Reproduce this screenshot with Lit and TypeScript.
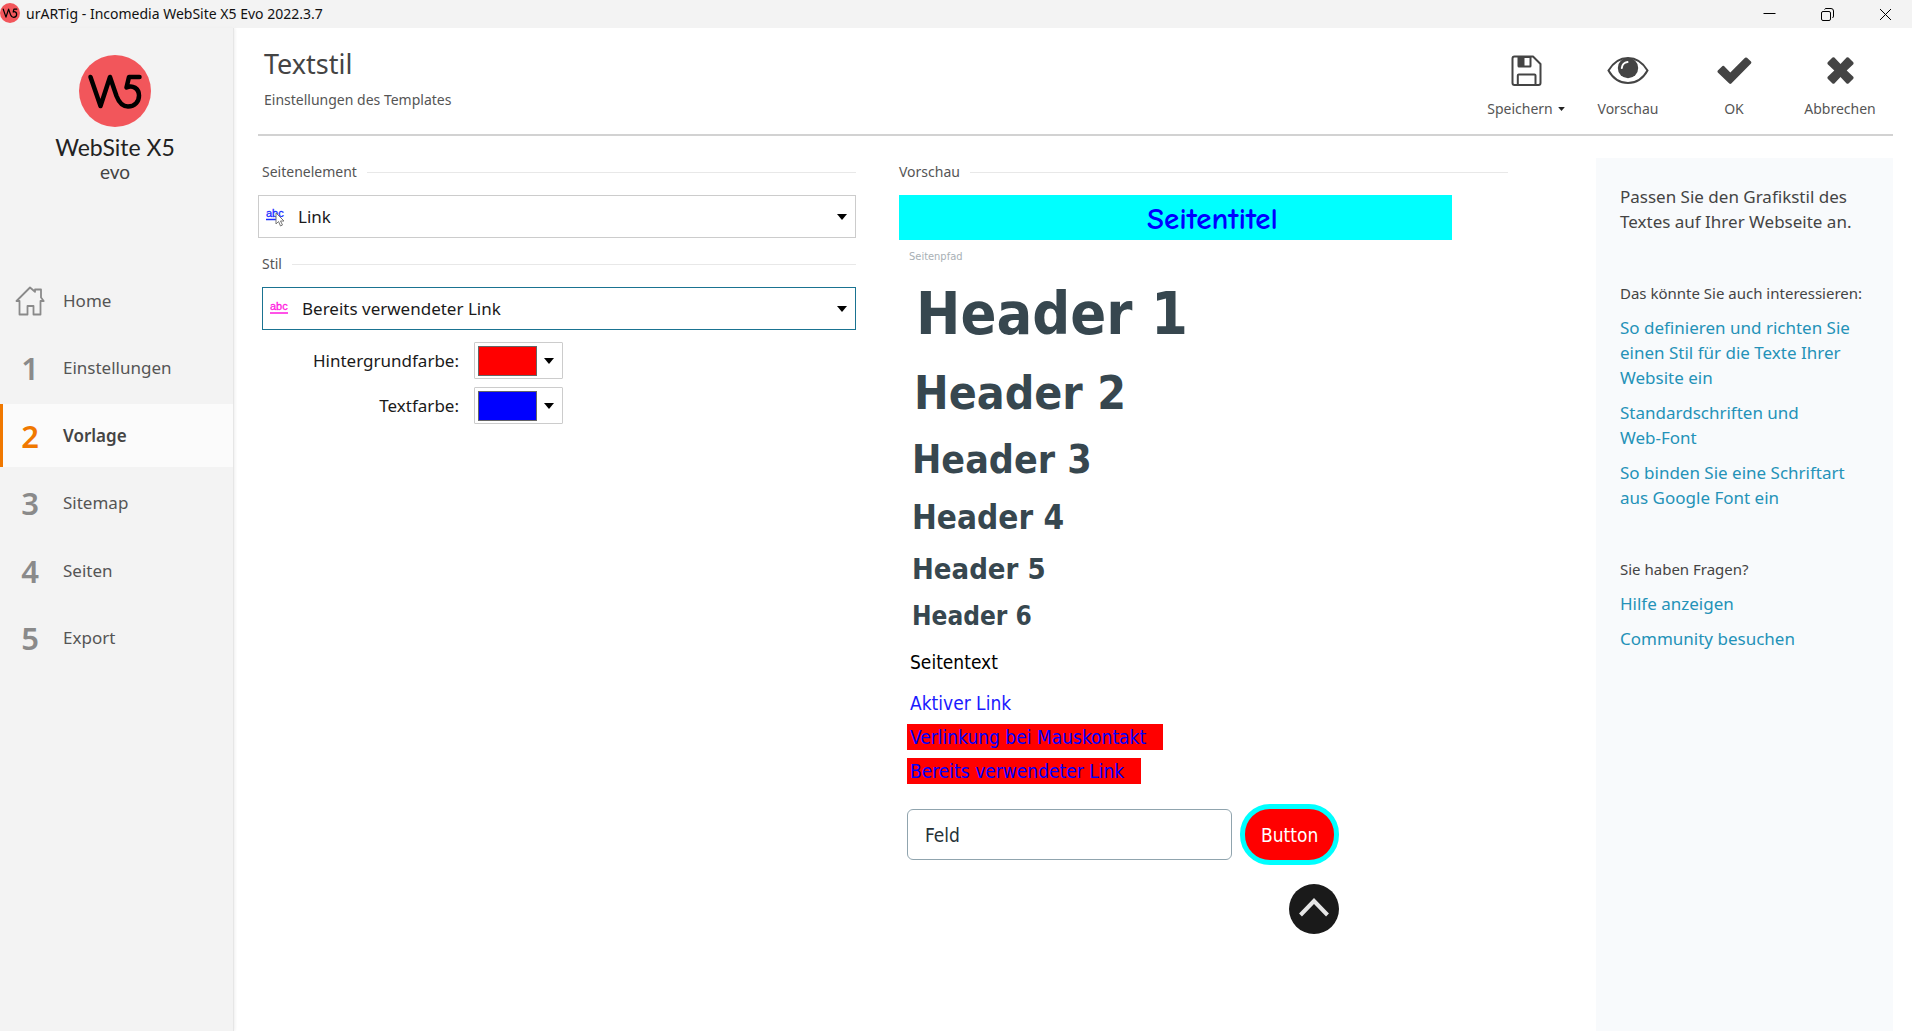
import { LitElement, html, svg, css } from "lit";
import { customElement, property, state } from "lit/decorators.js";
import { classMap } from "lit/directives/class-map.js";
import { styleMap } from "lit/directives/style-map.js";

/* Round product mark, shared by the title bar and the sidebar. */
const mark = (cls: string) => html`
  <svg class=${cls} viewBox="0 0 72 72" aria-hidden="true">
    <circle cx="36" cy="36" r="36" fill="#f2565b" />
    <path
      d="M11.500 22 L21.500 51 L31 22 L37.500 41 Q41.500 51.500 49 51.500 C56 51.500 60 46.500 60 40.500 C60 33.500 53.500 29.500 47.500 32.500 L50 22 H60.500"
      fill="none" stroke="#000" stroke-width="4.500" stroke-linecap="round" stroke-linejoin="round" />
  </svg>`;

const caret = (cls = "caret") => html`
  <svg class=${cls} viewBox="0 0 10 6" aria-hidden="true"><path d="M0 0H10L5 6Z" fill="currentColor" /></svg>`;

const icons = {
  save: svg`
    <path d="M5 1.500 H23 L30.500 9 V28 Q30.500 30 28.500 30 H4.500 Q2.500 30 2.500 28 V3.500 Q2.500 1.500 4.500 1.500 Z" fill="none" stroke="#444" stroke-width="2" stroke-linejoin="round"/>
    <path d="M7.500 2 H21.500 V11 Q21.500 12.500 20 12.500 H9 Q7.500 12.500 7.500 11 Z" fill="#444"/>
    <rect x="14.500" y="3" width="5" height="7.500" fill="#fff"/>
    <path d="M7.800 30 V20.500 Q7.800 19.500 8.800 19.500 H24.500 Q25.500 19.500 25.500 20.500 V30" fill="none" stroke="#444" stroke-width="2"/>`,
  view: svg`
    <path d="M1.500 15.500 C6 8 13 3 21 3 C29 3 36 8 40.500 15.500 C36 23.500 29 28 21 28 C13 28 6 23.500 1.500 15.500 Z" fill="none" stroke="#444" stroke-width="2"/>
    <circle cx="21" cy="13" r="10.200" fill="#444"/>
    <path d="M14.800 13 A6.500 6.500 0 0 1 20.500 7" fill="none" stroke="#fff" stroke-width="2" stroke-linecap="round"/>`,
  ok: svg`
    <path d="M5.500 11 L0.800 15.500 Q0 16.500 0.800 17.500 L12.300 28.500 Q13.300 29.300 14.300 28.500 L34 8.500 Q34.800 7.500 34 6.500 L30 2.800 Q29 2 28 2.800 L13.300 17.500 L7 11 Q6.200 10.400 5.500 11 Z" fill="#444"/>`,
  cancel: svg`
    <path d="M5.500 2.500 L0.700 7.300 Q0 8.200 0.700 9.200 L7.300 15.500 L0.700 21.800 Q0 22.800 0.700 23.700 L5.500 28.400 Q6.400 29 7.400 28.400 L13.500 22 L19.600 28.400 Q20.600 29 21.500 28.400 L26.300 23.700 Q27 22.800 26.300 21.800 L19.700 15.500 L26.300 9.200 Q27 8.200 26.300 7.300 L21.500 2.500 Q20.600 2 19.600 2.500 L13.500 9 L7.400 2.500 Q6.400 2 5.500 2.500 Z" fill="#444"/>`,
};

interface NavItem {
  step: string;
  label: string;
}

@customElement("app-sidebar")
export class AppSidebar extends LitElement {
  @state() private current = 2;

  private items: NavItem[] = [
    { step: "", label: "Home" },
    { step: "1", label: "Einstellungen" },
    { step: "2", label: "Vorlage" },
    { step: "3", label: "Sitemap" },
    { step: "4", label: "Seiten" },
    { step: "5", label: "Export" },
  ];

  static styles = css`
    :host {
      display: block;
      box-sizing: border-box;
      width: 234px;
      flex: none;
      background: #f3f3f3;
      border-right: 1px solid #e6e6e6;
      box-shadow: 1px 0 3px #eeeeee;
    }
    .brand {
      display: flex;
      flex-direction: column;
      align-items: center;
      padding: 27px 3px 0 0;
      color: #222222;
      font-family: Lato, "Noto Sans", sans-serif;
    }
    .mark {
      width: 72px;
      height: 72px;
    }
    .name {
      margin-top: 6px;
      font-size: 23px;
      line-height: 28px;
    }
    .edition {
      font-size: 19px;
      line-height: 22px;
      color: #444444;
    }
    .nav {
      display: flex;
      flex-direction: column;
      justify-content: space-between;
      min-height: 401px;
      margin-top: 86px;
    }
    .item {
      display: grid;
      grid-template-columns: 54px 1fr;
      column-gap: 6px;
      align-items: center;
      height: 63px;
      border-left: 3px solid transparent;
      color: #555555;
      font-size: 17px;
      line-height: 24px;
      text-decoration: none;
    }
    .item.active {
      border-left-color: #f07800;
      background: #fbfbfb;
      color: #444444;
      font-weight: 600;
    }
    .step {
      text-align: center;
      font-size: 31px;
      font-weight: 600;
      line-height: 40px;
      color: #8a8a8a;
    }
    .active .step {
      color: #f07800;
    }
    .home {
      justify-self: center;
      width: 30px;
      height: 30px;
    }
  `;

  render() {
    return html`
      <div class="brand">
        ${mark("mark")}
        <span class="name">WebSite X5</span>
        <span class="edition">evo</span>
      </div>
      <nav class="nav">
        ${this.items.map(
          (item, i) => html`
            <a
              href="#${item.label}"
              class=${classMap({ item: true, active: i === this.current })}
              @click=${() => (this.current = i)}
            >
              ${item.step
                ? html`<span class="step">${item.step}</span>`
                : html`<svg class="home" viewBox="0 0 30 30" aria-hidden="true">
                    <path
                      d="M4.500 15 H1.500 L15 1.500 L20 5.800 V3.500 H26 V11.500 L28.700 15 H25.500 V28.500 H18.500 V20 H12.500 V28.500 H4.500 Z"
                      fill="none" stroke="#8a8a8a" stroke-width="1.800" stroke-linejoin="round" />
                  </svg>`}
              <span>${item.label}</span>
            </a>
          `,
        )}
      </nav>
    `;
  }
}

@customElement("section-title")
export class SectionTitle extends LitElement {
  @property() label = "";

  static styles = css`
    :host {
      display: flex;
      align-items: center;
      gap: 10px;
      font-size: 14px;
      line-height: 20px;
      color: #555555;
    }
    .rule {
      flex: 1;
      height: 1px;
      background: #e8e8e8;
    }
  `;

  render() {
    return html`<span>${this.label}</span><span class="rule"></span>`;
  }
}

@customElement("style-form")
export class StyleForm extends LitElement {
  private colours = [
    { id: "background", label: "Hintergrundfarbe:", value: "#ff0000" },
    { id: "text", label: "Textfarbe:", value: "#0000ff" },
  ];

  static styles = css`
    :host {
      display: block;
    }
    .first {
      padding-left: 4px;
    }
    .second {
      margin-top: 16px;
      padding-left: 4px;
    }
    .combo {
      display: flex;
      align-items: center;
      box-sizing: border-box;
      height: 43px;
      margin-top: 13px;
      padding: 0 8px 0 7px;
      border: 1px solid #cccccc;
      background: #ffffff;
    }
    .combo.focused {
      margin-left: 4px;
      border-color: #1a7391;
    }
    .combo-icon {
      flex: none;
      width: 20px;
      height: 20px;
      font-family: "Liberation Sans", sans-serif;
      font-size: 11px;
    }
    .select {
      flex: 1;
      min-width: 0;
      height: 100%;
      padding: 0 0 1px 12px;
      border: 0;
      outline: 0;
      appearance: none;
      background: transparent;
      color: #1a1a1a;
      font: inherit;
      font-size: 17px;
    }
    .caret {
      flex: none;
      width: 10px;
      height: 6px;
      color: #000000;
      pointer-events: none;
    }
    .colours {
      display: grid;
      grid-template-columns: 201px max-content;
      gap: 8px 15px;
      align-items: center;
      margin-top: 12px;
    }
    .label {
      justify-self: end;
      color: #1a1a1a;
      font-size: 17px;
      line-height: 24px;
    }
    .picker {
      display: flex;
      align-items: center;
      gap: 7px;
      box-sizing: border-box;
      height: 37px;
      padding: 0 8px 0 3px;
      border: 1px solid #cccccc;
      border-radius: 1px;
      background: #ffffff;
    }
    .swatch {
      box-sizing: border-box;
      width: 59px;
      height: 30px;
      border: 1px solid #666666;
    }
  `;

  render() {
    return html`
      <section-title class="first" label="Seitenelement"></section-title>
      <div class="combo">
        <svg class="combo-icon" viewBox="0 0 20 20" aria-hidden="true">
          <text x="0" y="10" fill="#1a2cff" stroke="#1a2cff" stroke-width="0.300">abc</text>
          <path d="M0 12.500H11" stroke="#1a2cff" stroke-width="1.500" />
          <path d="M10 6 V17 L12.500 14.500 L14.500 19 L16.500 18 L14.500 14 H18 Z" fill="#fff" stroke="#777" />
        </svg>
        <select class="select" aria-label="Seitenelement">
          <option>Link</option>
        </select>
        ${caret()}
      </div>
      <section-title class="second" label="Stil"></section-title>
      <div class="combo focused">
        <svg class="combo-icon" viewBox="0 0 20 20" aria-hidden="true">
          <text x="0" y="11" fill="#ff1adf" stroke="#ff1adf" stroke-width="0.300">abc</text>
          <path d="M0 14H18" stroke="#ff1adf" stroke-width="1.500" />
        </svg>
        <select class="select" aria-label="Stil">
          <option>Bereits verwendeter Link</option>
        </select>
        ${caret()}
      </div>
      <div class="colours">
        ${this.colours.map(
          (c) => html`
            <label class="label" for=${c.id}>${c.label}</label>
            <button class="picker" id=${c.id} type="button">
              <span class="swatch" style=${styleMap({ background: c.value })}></span>
              ${caret()}
            </button>
          `,
        )}
      </div>
    `;
  }
}

@customElement("style-preview")
export class StylePreview extends LitElement {
  static styles = css`
    :host {
      display: block;
      font-family: "DejaVu Sans Condensed", "Noto Sans", sans-serif;
    }
    .caption {
      font-family: "Noto Sans", sans-serif;
    }
    .page-title {
      box-sizing: border-box;
      height: 45px;
      margin: 13px 56px 0 0;
      padding: 3px 0 0 74px;
      background: #00ffff;
      color: #0000ff;
      font-family: "Comic Sans MS", "Comic Neue", "Noto Sans", sans-serif;
      font-size: 31px;
      font-weight: 700;
      line-height: 42px;
      text-align: center;
    }
    .path {
      margin: 9px 0 0 10px;
      color: #a8b0b5;
      font-size: 11px;
      line-height: 16px;
    }
    .h {
      margin: 0;
      color: #37474f;
      font-weight: 700;
    }
    .h1 {
      padding: 13px 0 0 17px;
      font-size: 59px;
      line-height: 72px;
    }
    .h2 {
      padding: 15px 0 0 15px;
      font-size: 46px;
      line-height: 56px;
    }
    .h3 {
      padding: 15px 0 0 13px;
      font-size: 39px;
      line-height: 48px;
    }
    .h4 {
      padding: 13px 0 0 13px;
      font-size: 33px;
      line-height: 42px;
    }
    .h5 {
      padding: 12px 0 0 13px;
      font-size: 29px;
      line-height: 36px;
    }
    .h6 {
      padding: 13px 0 0 13px;
      font-size: 26px;
      line-height: 32px;
    }
    .lines {
      display: flex;
      flex-direction: column;
      align-items: flex-start;
      gap: 8px;
      margin-left: 8px;
      font-size: 19px;
      line-height: 26px;
    }
    .line {
      padding: 0 17px 0 3px;
      color: #1a1aff;
      text-decoration: none;
    }
    .body-text {
      margin: 17px 0 7px;
      color: #000000;
    }
    .filled {
      background: #ff0000;
      color: #0000ff;
    }
    .controls {
      display: flex;
      flex-direction: column;
      align-items: flex-end;
      gap: 19px;
      width: fit-content;
      margin: 20px 0 0 8px;
    }
    .row {
      display: flex;
      align-items: center;
      gap: 8px;
    }
    .field {
      box-sizing: border-box;
      width: 325px;
      height: 51px;
      padding: 0 17px;
      border: 1px solid #90a4ae;
      border-radius: 6px;
      background: #ffffff;
      color: #263238;
      font: inherit;
      font-size: 19px;
    }
    .button {
      height: 61px;
      padding: 0 16px;
      border: 5px solid #00ffff;
      border-radius: 30px;
      background: #ff0000;
      color: #ffffff;
      font: inherit;
      font-size: 19px;
    }
    .up {
      width: 50px;
      height: 50px;
      padding: 0;
      border: 0;
      border-radius: 50%;
      background: #1a1a1a;
    }
    .up-icon {
      display: block;
      width: 50px;
      height: 50px;
    }
  `;

  render() {
    return html`
      <section-title class="caption" label="Vorschau"></section-title>
      <div class="page-title">Seitentitel</div>
      <div class="path">Seitenpfad</div>
      <h1 class="h h1">Header 1</h1>
      <h2 class="h h2">Header 2</h2>
      <h3 class="h h3">Header 3</h3>
      <h4 class="h h4">Header 4</h4>
      <h5 class="h h5">Header 5</h5>
      <h6 class="h h6">Header 6</h6>
      <div class="lines">
        <p class="line body-text">Seitentext</p>
        <a class="line" href="#active">Aktiver Link</a>
        <a class="line filled" href="#hover">Verlinkung bei Mauskontakt</a>
        <a class="line filled" href="#visited">Bereits verwendeter Link</a>
      </div>
      <div class="controls">
        <div class="row">
          <input class="field" type="text" value="Feld" aria-label="Feld" />
          <button class="button" type="button">Button</button>
        </div>
        <button class="up" type="button" aria-label="Nach oben">
          <svg class="up-icon" viewBox="0 0 50 50" aria-hidden="true">
            <path d="M11.500 31 L25 17 L38.500 31" fill="none" stroke="#e6e6e6" stroke-width="4" />
          </svg>
        </button>
      </div>
    `;
  }
}

@customElement("help-panel")
export class HelpPanel extends LitElement {
  static styles = css`
    :host {
      display: block;
      box-sizing: border-box;
      padding: 26px 20px 0 24px;
      background: #f8fafc;
      color: #444444;
      font-size: 17px;
      line-height: 25px;
    }
    .intro {
      margin: 0;
    }
    .title {
      margin: 49px 0 12px;
      font-size: 15px;
      font-weight: 400;
      line-height: 20px;
      white-space: nowrap;
    }
    .list {
      display: flex;
      flex-direction: column;
      gap: 10px;
      margin: 0;
      padding: 0;
      list-style: none;
    }
    .link {
      color: #2492b8;
      text-decoration: none;
    }
    .keep {
      white-space: nowrap;
    }
  `;

  render() {
    return html`
      <p class="intro">Passen Sie den Grafikstil des Textes auf Ihrer Webseite an.</p>
      <h2 class="title">Das könnte Sie auch interessieren:</h2>
      <ul class="list">
        <li><a class="link" href="#stil">So definieren und richten Sie einen Stil für die Texte Ihrer Website ein</a></li>
        <li><a class="link" href="#fonts">Standardschriften und <span class="keep">Web-Font</span></a></li>
        <li><a class="link" href="#google">So binden Sie eine Schriftart aus Google Font ein</a></li>
      </ul>
      <h2 class="title">Sie haben Fragen?</h2>
      <ul class="list">
        <li><a class="link" href="#hilfe">Hilfe anzeigen</a></li>
        <li><a class="link" href="#community">Community besuchen</a></li>
      </ul>
    `;
  }
}

@customElement("app-root")
export class AppRoot extends LitElement {
  static styles = css`
    :host {
      display: flex;
      flex-direction: column;
      min-height: 100vh;
      background: #ffffff;
      font-family: "Noto Sans", "Open Sans", sans-serif;
    }
    .titlebar {
      display: flex;
      align-items: center;
      gap: 6px;
      height: 28px;
      background: #f3f3f3;
      color: #111111;
      font-size: 14px;
      line-height: 26px;
    }
    .app-mark {
      width: 20px;
      height: 20px;
      margin-bottom: 2px;
    }
    .app-name {
      flex: 1;
    }
    .window-button {
      width: 58px;
      height: 26px;
      padding: 0;
      border: 0;
      background: transparent;
    }
    .window-icon {
      width: 13px;
      height: 13px;
      vertical-align: middle;
    }
    .window-buttons {
      display: flex;
      margin-right: -2px;
    }
    .frame {
      display: flex;
      flex: 1;
    }
    .main {
      display: flex;
      flex: 1;
      flex-direction: column;
      min-width: 0;
      padding: 0 19px 0 24px;
    }
    .header {
      display: flex;
      justify-content: space-between;
      box-sizing: border-box;
      height: 108px;
      padding: 18px 0 0 6px;
      border-bottom: 2px solid #d2d2d2;
      color: #444444;
    }
    .title {
      margin: 0 0 8px;
      font-size: 27px;
      font-weight: 400;
      line-height: 36px;
    }
    .subtitle {
      margin: 0;
      font-size: 14px;
      line-height: 20px;
      color: #555555;
    }
    .toolbar {
      display: grid;
      grid-template-columns: 98px repeat(3, 106px);
      align-items: start;
      padding-top: 9px;
    }
    .tool {
      display: flex;
      flex-direction: column;
      align-items: center;
      gap: 11px;
      padding: 0;
      border: 0;
      background: transparent;
      color: #555555;
      font: inherit;
      font-size: 14px;
      line-height: 20px;
    }
    .tool-label {
      display: flex;
      align-items: center;
      gap: 5px;
    }
    .small-caret {
      width: 7px;
      height: 4px;
      color: #222222;
    }
    .body {
      display: flex;
      flex: 1;
      gap: 88px;
    }
    .content {
      display: grid;
      flex: 1;
      grid-template-columns: 598fr 609fr;
      gap: 43px;
      min-width: 0;
      padding: 26px 0 40px;
    }
    .help {
      flex: none;
      width: 297px;
      margin-top: 22px;
    }
  `;

  private tool(label: string, width: number, icon: unknown, menu = false) {
    return html`
      <button class="tool" type="button">
        <svg width=${width} height="33" viewBox="0 0 ${width} 33" aria-hidden="true">${icon}</svg>
        <span class="tool-label">${label}${menu ? caret("small-caret") : null}</span>
      </button>
    `;
  }

  private windowButton(label: string, d: string) {
    return html`
      <button class="window-button" type="button" aria-label=${label}>
        <svg class="window-icon" viewBox="0 0 13 13" aria-hidden="true">
          <path d=${d} fill="none" stroke="#000" />
        </svg>
      </button>
    `;
  }

  render() {
    return html`
      <div class="titlebar">
        ${mark("app-mark")}
        <span class="app-name">urARTig - Incomedia WebSite X5 Evo 2022.3.7</span>
        <div class="window-buttons">
          ${this.windowButton("Minimieren", "M0.500 5.500H12.500")}
          ${this.windowButton(
            "Verkleinern",
            "M2 3.500H8Q9.500 3.500 9.500 5V11Q9.500 12.500 8 12.500H2Q.5 12.500 .5 11V5Q.5 3.500 2 3.500ZM3.500 1.500Q4 .5 5 .5H10Q12.500 .5 12.500 3V8Q12.500 9 11.500 10",
          )}
          ${this.windowButton("Schließen", "M1 1L12 12M12 1L1 12")}
        </div>
      </div>
      <div class="frame">
        <app-sidebar></app-sidebar>
        <main class="main">
          <header class="header">
            <div>
              <h1 class="title">Textstil</h1>
              <p class="subtitle">Einstellungen des Templates</p>
            </div>
            <div class="toolbar">
              ${this.tool("Speichern", 33, icons.save, true)}
              ${this.tool("Vorschau", 42, icons.view)}
              ${this.tool("OK", 35, icons.ok)}
              ${this.tool("Abbrechen", 27, icons.cancel)}
            </div>
          </header>
          <div class="body">
            <div class="content">
              <style-form></style-form>
              <style-preview></style-preview>
            </div>
            <help-panel class="help"></help-panel>
          </div>
        </main>
      </div>
    `;
  }
}
